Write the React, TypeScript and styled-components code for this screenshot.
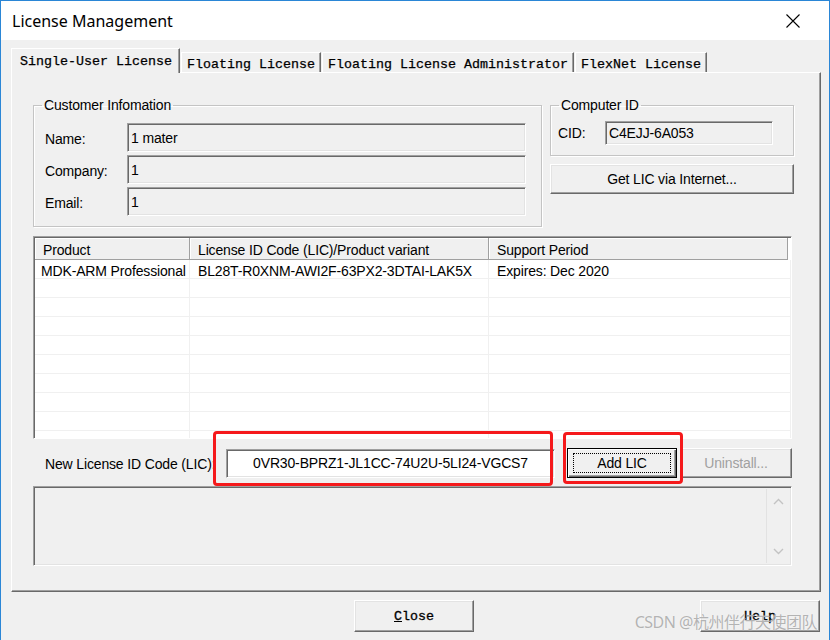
import React from "react";
import styled, { createGlobalStyle } from "styled-components";

const UI_FONT = `"Liberation Sans", Arial, sans-serif`;
const MONO_FONT = `"Liberation Mono", "Courier New", monospace`;

const GlobalStyle = createGlobalStyle`
  html, body {
    margin: 0;
    padding: 0;
    background: #f0f0f0;
  }
  body {
    font-family: ${UI_FONT};
  }
  * {
    box-sizing: border-box;
  }
`;

const Window = styled.div`
  position: relative;
  width: 830px;
  height: 640px;
  border: 1px solid #2a86d6;
  border-bottom: none;
  display: flex;
  flex-direction: column;
  background: #f0f0f0;
  overflow: hidden;
`;

const TitleBar = styled.div`
  height: 39px;
  flex: none;
  background: #fff;
  display: flex;
  align-items: center;
  justify-content: space-between;
  padding: 0 29px 0 11px;
  font-family: "Noto Sans", sans-serif;
  font-size: 16px;
  color: #000;
`;

const Body = styled.div`
  padding: 8px 8px 0 10px;
  display: flex;
  flex-direction: column;
`;

const TabStrip = styled.div`
  height: 24px;
  display: flex;
  align-items: flex-end;
  position: relative;
  z-index: 1;
`;

const Tab = styled.div<{ $active?: boolean }>`
  height: ${(p) => (p.$active ? "25px" : "20px")};
  margin-bottom: ${(p) => (p.$active ? "-1px" : "0")};
  margin-left: ${(p) => (p.$active ? "0" : "1px")};
  padding: ${(p) => (p.$active ? "4px 7px 0 8px" : "3px 5px 0 5px")};
  background: #f0f0f0;
  border-top: 1px solid #fff;
  border-left: 1px solid #fff;
  border-right: 1px solid #696969;
  box-shadow: inset -1px 0 #a0a0a0;
  font-family: ${MONO_FONT};
  font-size: 13.33px;
  line-height: 17px;
  color: #000;
  -webkit-text-stroke: 0.25px #000;
  white-space: nowrap;
`;

const Panel = styled.div`
  height: 520px;
  border-top: 1px solid #fff;
  border-left: 1px solid #fff;
  border-right: 1px solid #696969;
  border-bottom: 1px solid #696969;
  box-shadow: inset -1px -1px #a0a0a0;
  padding: 24px 26px 0 21px;
  display: flex;
  flex-direction: column;
  font-size: 14px;
  letter-spacing: -0.15px;
  color: #000;
`;

const TopSection = styled.div`
  display: grid;
  grid-template-columns: 509px 244px;
  column-gap: 8px;
  align-items: start;
`;

const GroupBox = styled.fieldset`
  margin: 0;
  padding: 0;
  min-width: 0;
  border: 1px solid #c4c4c4;
  box-shadow: inset 1px 1px #fff, 1px 1px #fff;
`;

const Legend = styled.legend`
  margin-left: 8px;
  padding: 0 2px;
  line-height: 16px;
  font-size: 14px;
  color: #000;
`;

const CustomerGrid = styled.div`
  display: grid;
  grid-template-columns: 82px 1fr;
  grid-auto-rows: 29px;
  row-gap: 3px;
  align-items: center;
  padding: 10px 15px 10px 11px;
`;

const Label = styled.span`
  white-space: nowrap;
  padding-top: 3px;
`;

const Field = styled.div<{ $white?: boolean; $center?: boolean }>`
  height: 100%;
  display: flex;
  align-items: center;
  justify-content: ${(p) => (p.$center ? "center" : "flex-start")};
  padding: 0 3px;
  background: ${(p) => (p.$white ? "#fff" : "#f0f0f0")};
  border: 1px solid;
  border-color: #a0a0a0 #fff #fff #a0a0a0;
  box-shadow: inset 1px 1px #696969, inset -1px -1px #e3e3e3;
  white-space: nowrap;
  overflow: hidden;
`;

const RightColumn = styled.div`
  display: flex;
  flex-direction: column;
  gap: 8px;
`;

const CidRow = styled.div`
  display: flex;
  align-items: center;
  height: 42px;
  padding: 8px 19px 10px 7px;
`;

const CidLabel = styled.span`
  width: 47px;
  flex: none;
`;

const CidField = styled(Field)`
  width: 168px;
  height: 24px;
`;

const Button = styled.button<{ $default?: boolean; $disabled?: boolean; $mono?: boolean }>`
  display: flex;
  align-items: stretch;
  justify-content: center;
  padding: ${(p) => (p.$default ? "4px 5px" : "0")};
  height: 30px;
  background: #f0f0f0;
  border: 1px solid;
  border-color: ${(p) => (p.$default ? "#000" : "#fff #696969 #696969 #fff")};
  box-shadow: ${(p) =>
    p.$default
      ? "inset 1px 1px #fff, inset -1px -1px #696969, inset -2px -2px #a0a0a0"
      : "inset -1px -1px #a0a0a0, inset 1px 1px #e3e3e3"};
  font-family: ${(p) => (p.$mono ? MONO_FONT : UI_FONT)};
  font-size: ${(p) => (p.$mono ? "13.33px" : "14px")};
  letter-spacing: ${(p) => (p.$mono ? "0" : "-0.15px")};
  -webkit-text-stroke: ${(p) => (p.$mono ? "0.3px #000" : "0")};
  color: ${(p) => (p.$disabled ? "#a0a0a0" : "#000")};
  cursor: default;
`;

const ButtonText = styled.span<{ $focus?: boolean }>`
  flex: 1;
  display: flex;
  align-items: center;
  justify-content: center;
  border: 1px dotted ${(p) => (p.$focus ? "#000" : "transparent")};
`;

const ListView = styled.div`
  margin-top: 9px;
  width: 759px;
  height: 203px;
  background: #fff;
  border: 1px solid;
  border-color: #a0a0a0 #fff #fff #a0a0a0;
  box-shadow: inset 1px 1px #696969;
  padding: 1px 0 0 1px;
  overflow: hidden;
`;

const ListHeader = styled.div`
  display: grid;
  grid-template-columns: 155px 299px 299px 1fr;
  height: 22px;
`;

const HeaderCell = styled.div<{ $filler?: boolean }>`
  display: flex;
  align-items: center;
  padding: 3px 0 0 8px;
  background: ${(p) => (p.$filler ? "#fff" : "#f0f0f0")};
  border-right: ${(p) => (p.$filler ? "none" : "1px solid #a0a0a0")};
  border-bottom: ${(p) => (p.$filler ? "none" : "1px solid #a0a0a0")};
  box-shadow: ${(p) => (p.$filler ? "none" : "inset 1px 1px #fff")};
  white-space: nowrap;
`;

const ListRow = styled.div`
  display: grid;
  grid-template-columns: 155px 299px 1fr;
  height: 19px;
  border-bottom: 1px solid #f0f0f0;
`;

const ListCell = styled.div`
  padding: 3px 0 0 8px;
  line-height: 16px;
  border-right: 1px solid #f0f0f0;
  white-space: nowrap;

  &:first-child {
    padding-left: 6px;
  }
`;

const LicRow = styled.div`
  position: relative;
  margin-top: 9px;
  height: 30px;
  display: flex;
  align-items: center;
  padding-left: 12px;
`;

const LicLabel = styled.span`
  width: 181px;
  flex: none;
  white-space: nowrap;
  padding-top: 2px;
`;

const LicField = styled(Field)`
  width: 329px;
  height: 29px;
  flex: none;
`;

const Highlight = styled.div<{ $left: number; $top: number; $w: number; $h: number }>`
  position: absolute;
  left: ${(p) => p.$left}px;
  top: ${(p) => p.$top}px;
  width: ${(p) => p.$w}px;
  height: ${(p) => p.$h}px;
  border: 3px solid #f5191b;
  border-radius: 4px;
  pointer-events: none;
  z-index: 2;
`;

const MessageArea = styled.div`
  margin-top: 8px;
  width: 759px;
  height: 80px;
  display: flex;
  background: #f0f0f0;
  border: 1px solid;
  border-color: #a0a0a0 #fff #fff #a0a0a0;
  box-shadow: inset 1px 1px #696969, inset -1px -1px #e3e3e3;
`;

const MessageText = styled.div`
  flex: 1;
`;

const ScrollBar = styled.div`
  width: 23px;
  margin: 2px 2px 2px 0;
  border-left: 1px solid #e2e2e2;
  display: flex;
  flex-direction: column;
  justify-content: space-between;
  align-items: center;
  padding: 9px 0 8px;
`;

const Footer = styled.div`
  display: grid;
  grid-template-columns: 343px 120px 1fr;
  align-items: start;
  padding-top: 8px;
`;

const FooterButton = styled(Button)<{ $end?: boolean }>`
  width: 120px;
  height: 32px;
  justify-self: ${(p) => (p.$end ? "end" : "start")};
  margin-right: ${(p) => (p.$end ? "1px" : "0")};
`;

const Watermark = styled.div`
  position: absolute;
  right: 12px;
  bottom: 8px;
  font-family: "Noto Sans", "Noto Sans CJK SC", sans-serif;
  font-size: 16px;
  line-height: 20px;
  letter-spacing: -0.5px;
  color: rgba(160, 160, 160, 0.8);
  text-shadow: 0 0 1px rgba(255, 255, 255, 0.9);
  white-space: nowrap;
  pointer-events: none;
`;

const Chevron: React.FC<{ down?: boolean }> = ({ down }) => (
  <svg width="11" height="7" viewBox="0 0 11 7">
    <polyline
      points={down ? "1,1 5.5,5.5 10,1" : "1,6 5.5,1.5 10,6"}
      fill="none"
      stroke="#c3c3c3"
      strokeWidth="1.4"
    />
  </svg>
);

const CloseIcon = () => (
  <svg width="14" height="14" viewBox="0 0 14 14">
    <path d="M0.5 0.5 L13.5 13.5 M13.5 0.5 L0.5 13.5" stroke="#000" strokeWidth="1.1" />
  </svg>
);

const tabs = ["Single-User License", "Floating License", "Floating License Administrator", "FlexNet License"];

const rows = [["MDK-ARM Professional", "BL28T-R0XNM-AWI2F-63PX2-3DTAI-LAK5X", "Expires: Dec 2020"]];
for (let i = 0; i < 9; i++) rows.push(["", "", ""]);

export default function App() {
  return (
    <>
      <GlobalStyle />
      <Window>
        <TitleBar>
          <span>License Management</span>
          <CloseIcon />
        </TitleBar>
        <Body>
          <TabStrip>
            {tabs.map((t, i) => (
              <Tab key={t} $active={i === 0}>
                {t}
              </Tab>
            ))}
          </TabStrip>
          <Panel>
            <TopSection>
              <GroupBox>
                <Legend>Customer Infomation</Legend>
                <CustomerGrid>
                  <Label>Name:</Label>
                  <Field>1 mater</Field>
                  <Label>Company:</Label>
                  <Field>1</Field>
                  <Label>Email:</Label>
                  <Field>1</Field>
                </CustomerGrid>
              </GroupBox>
              <RightColumn>
                <GroupBox>
                  <Legend>Computer ID</Legend>
                  <CidRow>
                    <CidLabel>CID:</CidLabel>
                    <CidField>C4EJJ-6A053</CidField>
                  </CidRow>
                </GroupBox>
                <Button>
                  <ButtonText>Get LIC via Internet...</ButtonText>
                </Button>
              </RightColumn>
            </TopSection>

            <ListView>
              <ListHeader>
                <HeaderCell>Product</HeaderCell>
                <HeaderCell>License ID Code (LIC)/Product variant</HeaderCell>
                <HeaderCell>Support Period</HeaderCell>
                <HeaderCell $filler />
              </ListHeader>
              {rows.map((r, i) => (
                <ListRow key={i}>
                  {r.map((c, j) => (
                    <ListCell key={j}>{c}</ListCell>
                  ))}
                </ListRow>
              ))}
            </ListView>

            <LicRow>
              <LicLabel>New License ID Code (LIC):</LicLabel>
              <LicField $white $center>
                0VR30-BPRZ1-JL1CC-74U2U-5LI24-VGCS7
              </LicField>
              <Button $default style={{ width: 110, marginLeft: 12 }}>
                <ButtonText $focus>Add LIC</ButtonText>
              </Button>
              <Button $disabled style={{ width: 112, marginLeft: 3 }}>
                <ButtonText>Uninstall...</ButtonText>
              </Button>
              <Highlight $left={180} $top={-17} $w={340} $h={55} />
              <Highlight $left={530} $top={-16} $w={120} $h={52} />
            </LicRow>

            <MessageArea>
              <MessageText />
              <ScrollBar>
                <Chevron />
                <Chevron down />
              </ScrollBar>
            </MessageArea>
          </Panel>
          <Footer>
            <span />
            <FooterButton $mono>
              <ButtonText>
                <u>C</u>lose
              </ButtonText>
            </FooterButton>
            <FooterButton $mono $end>
              <ButtonText>Help</ButtonText>
            </FooterButton>
          </Footer>
        </Body>
        <Watermark>CSDN @杭州伴行天使团队</Watermark>
      </Window>
    </>
  );
}
